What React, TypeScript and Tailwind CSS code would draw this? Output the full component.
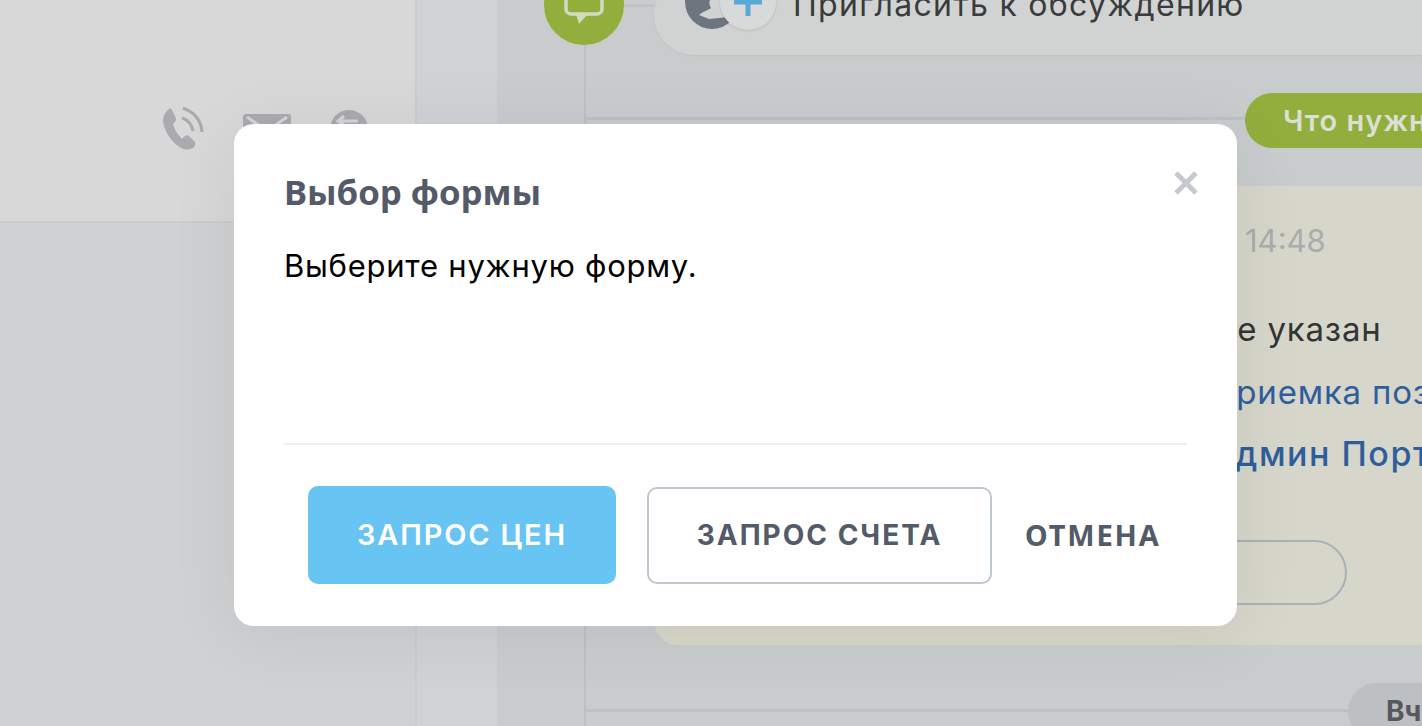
const sans = "font-['Inter','Liberation_Sans',sans-serif]"

function PhoneIcon() {
  return (
    <svg viewBox="0 0 42 44" className="w-[42px] h-[44px]" fill="none">
      <path
        d="M7 2 C3 5 1 9 1 14 C2 24 9 35 19 41 C23 43 27 43 31 41 C33 39 34 37 33 35 L27 29 C26 28 24 28 23 29 L20 32 C15 27 12 22 11 17 L13 15 C14 14 14 12 14 11 L10 3 C9 2 8 1 7 2 Z"
        fill="#a9abae"
      />
      <path d="M21 1 C32 5 39 13 40 25" stroke="#a9abae" strokeWidth="3" />
      <path d="M20 11 C26 13 30 18 31 24" stroke="#a9abae" strokeWidth="3" />
    </svg>
  )
}

function MailIcon() {
  return (
    <svg viewBox="0 0 48 36" className="w-[48px] h-[36px]" fill="none">
      <rect x="0" y="0" width="48" height="36" rx="3" fill="#a9abae" />
      <path d="M4 3 L24 17 L44 3" stroke="#d6d6d6" strokeWidth="3" />
    </svg>
  )
}

function ReplyIcon() {
  return (
    <svg viewBox="0 0 38 38" className="w-[38px] h-[38px]" fill="none">
      <circle cx="19" cy="19" r="19" fill="#a9abae" />
      <path d="M14 6 L8 11 L14 15 M9 11 H28" stroke="#d6d6d6" strokeWidth="3" />
    </svg>
  )
}

function ChatBadge() {
  return (
    <div className="absolute left-[-42px] top-[-35px] w-[80px] h-[80px] rounded-full bg-[#92ae3d] flex items-center justify-center">
      <svg viewBox="0 0 40 46" className="w-[40px] h-[46px] mt-[-6px]" fill="none">
        <rect x="2" y="2" width="36" height="33" rx="5" fill="#92ae3d" stroke="#d3dabf" strokeWidth="3.5" />
        <path d="M12 35 L15 45 L23 36 Z" fill="#d3dabf" />
      </svg>
    </div>
  )
}

function InviteAvatar() {
  return (
    <div className="relative w-[54px] h-[54px] shrink-0 mt-[-26px]">
      <svg viewBox="0 0 54 54" className="w-[54px] h-[54px]" fill="none">
        <circle cx="27" cy="27" r="27" fill="#6d7680" />
        <path d="M14 40 C18 36 22 36 26 33 C24 30 24 27 25 25 L36 25 L44 42 L24 44 Z" fill="#d1d3d2" />
      </svg>
      <div className="absolute left-[35px] top-[-1px] w-[56px] h-[56px] rounded-full bg-[#d8d9d9] shadow-[0_1px_3px_rgba(0,0,0,0.1)] flex items-center justify-center">
        <svg viewBox="0 0 28 28" className="w-[28px] h-[28px]" fill="none">
          <path d="M14 0 V28 M0 14 H28" stroke="#58a9d4" strokeWidth="5" />
        </svg>
      </div>
    </div>
  )
}

function ChatFeed() {
  return (
    <div className={`relative flex-1 min-w-0 ${sans}`}>
      <ChatBadge />

      {/* invite row, cut by the top of the window */}
      <div className="h-[120px] border-b-[3px] border-[#bec0c3]">
        <div className="flex items-center h-[55px]">
          <div className="w-[68px] h-[3px] bg-[#c0c3c6] mt-[-44px]" />
          <div className="flex-1 h-[80px] mt-[-25px] rounded-l-[40px] bg-[#d1d3d2] flex items-center pl-[31px] gap-[54px] shadow-[0_1px_2px_rgba(0,0,0,0.06)]">
            <InviteAvatar />
            <span className="text-[32px] tracking-[1.3px] text-[#3a3b3c] whitespace-nowrap mt-[-20px]">
              Пригласить к обсуждению
            </span>
          </div>
        </div>
      </div>

      {/* date marker */}
      <div className="flex justify-end mt-[-27px] h-[55px]">
        <div className="w-[177px] h-[55px] rounded-l-[28px] bg-[#92ae3d] pl-[38px] flex items-center overflow-hidden">
          <span className="text-[29px] font-semibold tracking-[1px] text-[#dcdfd6] whitespace-nowrap">
            Что нужно сделать
          </span>
        </div>
      </div>

      {/* message card */}
      <div className="ml-[68px] mt-[38px] h-[459px] rounded-l-[24px] bg-[#d6d6ca] overflow-hidden">
        <div className="pl-[591px] pt-[35px] text-[31px] leading-[40px] text-[#a9acae] whitespace-nowrap">
          14:48
        </div>
        <div className="pl-[480px] pt-[48px] text-[33px] leading-[40px] tracking-[0.8px] whitespace-nowrap">
          <div className="text-[#333436] pl-[83px]">не указан</div>
          <div className="text-[#2f5e9c] mt-[23px] pl-[77px]">Приемка позиций</div>
          <div className="text-[#2f5e9c] mt-[22px] pl-[76px] text-[34px] font-medium tracking-[1.5px]">Админ Портала</div>
        </div>
        <div className="ml-[301px] mt-[66px] w-[392px] h-[65px] rounded-[33px] border-2 border-[#a8b0ba]" />
      </div>

      {/* previous day marker */}
      <div className="flex items-center mt-[38px]">
        <div className="w-[762px] h-[3px] bg-[#bfc0c4] shrink-0 mt-[-1px]" />
        <div className="flex-1 h-[56px] rounded-l-[28px] bg-[#bcc0c3] pl-[38px] flex items-center overflow-hidden">
          <span className="text-[28px] font-bold text-[#55585c] whitespace-nowrap">Вчера</span>
        </div>
      </div>
    </div>
  )
}

function FormDialog() {
  return (
    <div className={`absolute left-[234px] top-[124px] w-[1003px] h-[502px] rounded-[20px] bg-white shadow-[0_8px_70px_rgba(0,0,0,0.07)] flex flex-col pl-[50px] pr-[50px] ${sans}`}>
      <div className="flex items-start justify-between pt-[44px]">
        <h2 className="font-['Noto_Sans',sans-serif] text-[34.7px] leading-[48px] font-bold text-[#535a68]">
          Выбор формы
        </h2>
        <svg viewBox="0 0 24 24" className="w-[24px] h-[24px] mr-[-11px] mt-[3px]" fill="none">
          <path d="M2 2 L22 22 M22 2 L2 22" stroke="#c6c9ce" strokeWidth="5" />
        </svg>
      </div>
      <p className="mt-[28px] text-[31px] leading-[44px] tracking-[0.75px] text-black">
        Выберите нужную форму.
      </p>
      <div className="mt-[155px] h-[2px] bg-[#eeeeee]" />
      <div className="flex items-center mt-[41px] pl-[24px]">
        <button className="w-[308px] h-[98px] rounded-[10px] bg-[#67c4f3] text-white text-[29px] font-semibold tracking-[1.8px]">
          ЗАПРОС ЦЕН
        </button>
        <button className="ml-[31px] w-[345px] h-[97px] rounded-[10px] border-2 border-[#bfc8d1] text-[#535a68] text-[28px] font-bold tracking-[2px]">
          ЗАПРОС СЧЕТА
        </button>
        <button className="ml-[33px] font-['Noto_Sans',sans-serif] text-[#535a68] text-[29px] font-bold tracking-[1.8px]">
          ОТМЕНА
        </button>
      </div>
    </div>
  )
}

export default function App() {
  return (
    <div className="relative flex w-[1422px] h-[726px] overflow-hidden bg-[#c8cccd]">
      {/* contacts column */}
      <aside className="w-[417px] shrink-0 border-r-2 border-[#c9cbcd] bg-[#d0d1d3]">
        <div className="h-[223px] border-b-2 border-[#cbcbcc] bg-[#d8d8d8] pt-[107px] pl-[162px] flex items-start">
          <PhoneIcon />
          <div className="ml-[39px] mt-[7px]"><MailIcon /></div>
          <div className="ml-[39px] mt-[3px]"><ReplyIcon /></div>
        </div>
      </aside>

      {/* narrow rail */}
      <div className="w-[80px] shrink-0 bg-[#d0d2d4]" />

      {/* timeline */}
      <div className="flex flex-1 min-w-0">
        <div className="w-[89px] shrink-0 border-r-2 border-[#bec0c3]" />
        <ChatFeed />
      </div>

      <FormDialog />
    </div>
  )
}
